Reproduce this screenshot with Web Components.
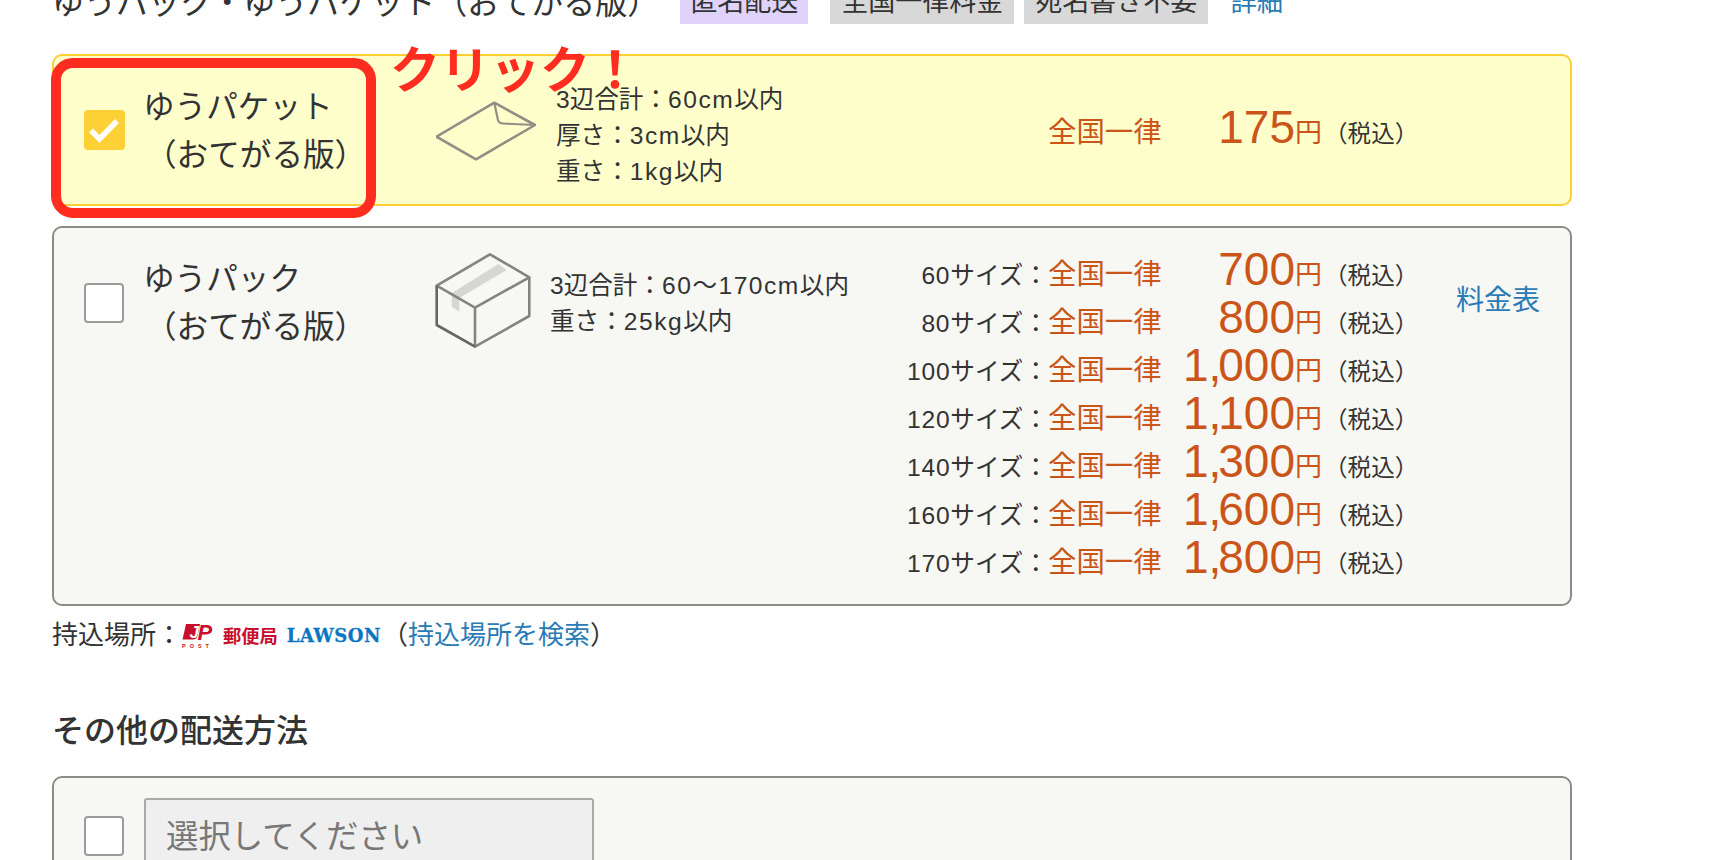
<!DOCTYPE html>
<html lang="ja">
  <head>
    <meta charset="UTF-8">
    <title>配送方法の選択</title>
    <style>
      html, body { margin: 0; height: 100%; overflow: hidden; background: #fff; }
      body { font-family: "Noto Sans CJK JP", sans-serif; color: #333; }
      spec-list i { font-style: normal; letter-spacing: 1.5px; }
      ship-name span { padding-left: 2px; }
    </style>
  </head>
  <body>
    <ship-page>
      <section-head>
        <span slot="title">ゆうパック・ゆうパケット（おてがる版）</span>
        <ship-tag slot="tags" tone="purple">匿名配送</ship-tag>
        <ship-tag slot="tags" style="margin-left:22px">全国一律料金</ship-tag>
        <ship-tag slot="tags" style="margin-left:10px">宛名書き不要</ship-tag>
        <text-link slot="tags" style="margin-left:22px;font-size:26.4px">詳細</text-link>
      </section-head>

      <ship-option tone="picked" style="margin-top:30px">
        <check-box slot="check" checked style="margin-top:54px"></check-box>
        <ship-name slot="name">ゆうパケット<br><span>（おてがる版）</span></ship-name>
        <envelope-icon slot="icon" style="margin-top:44px"></envelope-icon>
        <spec-list slot="spec" style="margin:26px 0 0 6px">
          <div>3辺合計：<i>60cm</i>以内</div>
          <div>厚さ：<i>3cm</i>以内</div>
          <div>重さ：<i>1kg</i>以内</div>
        </spec-list>
        <price-row slot="price" amount="175" style="margin-top:46px"></price-row>
        <click-note slot="note"></click-note>
      </ship-option>

      <ship-option style="margin-top:20px">
        <check-box slot="check" style="margin-top:55px"></check-box>
        <ship-name slot="name">ゆうパック<br><span>（おてがる版）</span></ship-name>
        <parcel-icon slot="icon" style="margin-top:24px"></parcel-icon>
        <spec-list slot="spec" style="margin-top:40px">
          <div>3辺合計：<i>60〜170cm</i>以内</div>
          <div>重さ：<i>25kg</i>以内</div>
        </spec-list>
        <price-row slot="price" size="60" amount="700" style="margin-top:16px"></price-row>
        <price-row slot="price" size="80" amount="800"></price-row>
        <price-row slot="price" size="100" amount="1,000"></price-row>
        <price-row slot="price" size="120" amount="1,100"></price-row>
        <price-row slot="price" size="140" amount="1,300"></price-row>
        <price-row slot="price" size="160" amount="1,600"></price-row>
        <price-row slot="price" size="170" amount="1,800" style="margin-bottom:24px"></price-row>
        <text-link slot="link" style="margin-top:50px;font-size:28px">料金表</text-link>
      </ship-option>

      <drop-note>
        持込場所：<carrier-logos></carrier-logos>（<text-link>持込場所を検索</text-link>）
      </drop-note>

      <other-head>その他の配送方法</other-head>

      <ship-option tone="other" style="margin-top:24px">
        <check-box slot="check" style="margin-top:38px"></check-box>
        <select-box slot="name">選択してください</select-box>
      </ship-option>
    </ship-page>

    <script>
      function shadow(host, html) {
        host.attachShadow({ mode: 'open' }).innerHTML = html;
      }

      function plain(name, css, html) {
        customElements.define(name, class extends HTMLElement {
          constructor() {
            super();
            shadow(this, `<style>${css}</style>${html || '<slot></slot>'}`);
          }
        });
      }

      plain('ship-page', `
        :host { display: block; width: 1520px; margin: -24px 0 0 52px; }
      `);

      plain('section-head', `
        :host { display: flex; height: 48px; line-height: 48px; font-size: 32px; white-space: nowrap; }
        .tags { display: flex; margin-left: 21px; }
      `, `<slot name="title"></slot><div class="tags"><slot name="tags"></slot></div>`);

      plain('ship-tag', `
        :host { display: block; padding: 0 11px; font-size: 27px; background: #d8d8d8; }
        :host([tone="purple"]) { padding: 0 10px; background: #dfd3fb; }
      `);

      plain('text-link', `
        :host { display: inline-block; color: #2a7bb5; }
      `);

      plain('ship-name', `
        :host { display: block; margin: 24px 0 0 -2px; font-size: 31.6px; line-height: 48px; }
      `);

      plain('spec-list', `
        :host {
          display: block; font-family: "Liberation Sans", "Noto Sans CJK JP", sans-serif;
          font-size: 24.6px; line-height: 36px; white-space: nowrap;
        }
      `);

      plain('drop-note', `
        :host { display: block; margin-top: 9px; font-size: 26px; line-height: 36px; white-space: nowrap; }
      `);

      plain('other-head', `
        :host { display: block; margin-top: 53px; font-size: 32px; font-weight: 500; line-height: 48px; }
      `);

      plain('select-box', `
        :host {
          display: block; box-sizing: border-box; width: 450px; height: 76px; margin: 20px 0 0 -1px;
          padding-left: 20px; line-height: 68px; font-size: 32.4px; color: #777;
          background: #efefef; border: 2px solid #aaa; border-radius: 3px;
        }
      `);

      plain('click-note', `
        :host { display: block; }
        .ring {
          position: absolute; left: -1px; top: 4px; width: 325px; height: 160px; box-sizing: border-box;
          border: 10px solid #ff2d1f; border-radius: 22px;
        }
        .say {
          position: absolute; left: 338px; top: -13px; font-size: 50px; line-height: 1;
          font-weight: 700; color: #ff2d1f; white-space: nowrap;
        }
      `, `<div class="ring"></div><div class="say">クリック！</div>`);

      plain('envelope-icon', `
        :host { display: block; width: 100px; height: 62px; margin-left: 1px; }
        svg { display: block; }
      `, `<svg width="100" height="62" viewBox="36 20 100 62" fill="none" stroke="#8f8f85" stroke-width="2.6" stroke-linejoin="round">
        <path d="M36.5 56.7 94.3 22.7 135 45 76 79.3Z"/>
        <path d="M94.3 22.7 98 40Q99 43.5 103 43.5L135 45" stroke-width="2.2"/>
      </svg>`);

      plain('parcel-icon', `
        :host { display: block; width: 98px; height: 97px; margin-left: -1px; }
        svg { display: block; }
      `, `<svg width="98" height="97" viewBox="34 172 98 97" fill="none" stroke="#858580" stroke-width="2.6" stroke-linejoin="round">
        <path d="M98.3 184 106.7 190 59.3 218V231.7L51.7 226.7V213.3Z" fill="#d6d6d4" stroke="none"/>
        <path d="M36.7 205.7 90 174.3 129.3 197.3 75 227.7Z"/>
        <path d="M129.3 197.3V236L75 266.7V227.7"/>
        <path d="M75 266.7 36.7 245V205.7" stroke="#66665f"/>
      </svg>`);

      customElements.define('check-box', class extends HTMLElement {
        constructor() {
          super();
          shadow(this, `
            <style>
              :host { display: block; width: 40px; height: 40px; }
              .off { box-sizing: border-box; width: 40px; height: 40px; background: #fff; border: 2px solid #9b9b9b; border-radius: 4px; }
              .on { width: 41px; height: 40px; background: #fdd035; border-radius: 4px; }
              svg { display: block; }
            </style>
            ${this.hasAttribute('checked')
              ? `<div class="on"><svg width="40" height="40" viewBox="0 0 40 40"><path d="M7 20.5 15.5 29 33 11" fill="none" stroke="#fff" stroke-width="5.5"/></svg></div>`
              : `<div class="off"></div>`}
          `);
        }
      });

      customElements.define('ship-option', class extends HTMLElement {
        constructor() {
          super();
          shadow(this, `
            <style>
              :host { display: block; position: relative; }
              .card {
                display: grid; grid-template-columns: 30px 40px 21px 290px 115px 329px 577px 1fr;
                box-sizing: border-box; border: 2px solid #8c8c86; border-radius: 10px; background: #f7f7f3;
              }
              :host([tone="picked"]) .card { height: 152px; border-color: #fccf33; background: #ffffcc; }
              :host([tone="other"]) .card { height: 160px; }
              .check { grid-column: 2; } .name { grid-column: 4; } .icon { grid-column: 5; }
              .spec { grid-column: 6; } .price { grid-column: 7; } .link { grid-column: 8; }
            </style>
            <div class="card">
              <div class="check"><slot name="check"></slot></div>
              <div class="name"><slot name="name"></slot></div>
              <div class="icon"><slot name="icon"></slot></div>
              <div class="spec"><slot name="spec"></slot></div>
              <div class="price"><slot name="price"></slot></div>
              <div class="link"><slot name="link"></slot></div>
            </div>
            <slot name="note"></slot>
          `);
        }
      });

      customElements.define('price-row', class extends HTMLElement {
        constructor() {
          super();
          const size = this.getAttribute('size');
          const amount = this.getAttribute('amount').replace(',', '<span class="comma">,</span>');
          shadow(this, `
            <style>
              :host { display: block; height: 48px; font-family: "Liberation Sans", "Noto Sans CJK JP", sans-serif; }
              .row {
                display: grid; grid-template-columns: 169px 114px 133px 29px auto; grid-template-rows: 48px;
                align-items: baseline; line-height: 48px; white-space: nowrap;
              }
              .size { font-size: 24.6px; text-align: right; }
              .size b { font-weight: 400; letter-spacing: .8px; }
              .flat { font-size: 28.4px; color: #cb5518; }
              .sum { font-size: 46px; color: #cb5518; text-align: right; transform: translateY(1px); }
              .comma { letter-spacing: -3px; }
              .yen { font-size: 27px; color: #cb5518; }
              .tax { font-size: 23.6px; }
            </style>
            <div class="row">
              <span class="size">${size ? `<b>${size}</b>サイズ：` : ''}</span>
              <span class="flat">全国一律</span>
              <span class="sum">${amount}</span>
              <span class="yen">円</span>
              <span class="tax">（税込）</span>
            </div>
          `);
        }
      });

      plain('carrier-logos', `
        :host { display: inline-flex; align-items: center; gap: 9px; height: 26px; margin: 0 1px 0 -1px; vertical-align: -5px; }
        svg { display: block; margin-bottom: 4px; }
        .post { margin-bottom: 6px; font-size: 18.3px; line-height: 1; font-weight: 700; color: #c8102e; white-space: nowrap; }
        .lawson {
          margin-bottom: 4px; font-family: "DejaVu Serif", serif; font-size: 18px; line-height: 1; font-weight: 700;
          color: #0b76bf; white-space: nowrap; letter-spacing: .5px; -webkit-text-stroke: .3px #0b76bf;
        }
      `, `<svg width="33" height="26" viewBox="0 0 33 26">
          <path d="M5 1H19L16.5 13Q15.5 16.5 12 16.5H1.5Z" fill="#c8102e"/>
          <text x="8.5" y="14.5" font-family="Liberation Sans" font-weight="700" font-style="italic" font-size="17" fill="#fff">J</text>
          <text x="16.5" y="16.5" font-family="Liberation Sans" font-weight="700" font-style="italic" font-size="22" fill="#c8102e">P</text>
          <text x="1" y="25" font-family="Liberation Sans" font-weight="700" font-size="5.5" letter-spacing="4" fill="#c8102e">POST</text>
        </svg>
        <span class="post">郵便局</span><span class="lawson">LAWSON</span>`);
    </script>
  </body>
</html>
